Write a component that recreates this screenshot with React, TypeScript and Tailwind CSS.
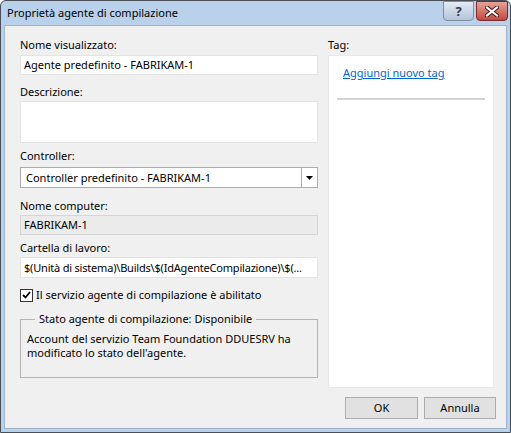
import React from "react";

const font = { fontFamily: '"Segoe UI", "Noto Sans", "Open Sans", sans-serif' };

function Label({ children, top }: { children: React.ReactNode; top: number }) {
  return (
    <div className="h-[16px] leading-[16px] text-[11px] text-black" style={{ marginTop: top }}>
      {children}
    </div>
  );
}

export default function App() {
  return (
    <div className="w-[511px] h-[433px] bg-white" style={font}>
      <div className="w-[511px] h-[433px] border border-[#4a4f57] rounded-t-[6px] bg-[#b9d1ea] flex flex-col">
        {/* Title bar */}
        <div className="h-[24px] flex items-center pl-[6px] pr-[2px] relative">
          <div className="text-[11px] text-black leading-[16px]">Proprietà agente di compilazione</div>
          <div className="ml-auto flex items-start self-start gap-[2px]">
            <div className="w-[31px] h-[20px] rounded-b-[4px] border border-[#7d8ea3] bg-gradient-to-b from-[#e3ebf4] to-[#b3c4d8] flex items-center justify-center text-[13px] font-bold text-[#2e3a4a] leading-none">
              ?
            </div>
            <div className="w-[32px] h-[20px] rounded-b-[4px] border border-[#7a2a2a] bg-gradient-to-b from-[#e5a198] to-[#c4483c] flex items-center justify-center">
              <svg width="14" height="11" viewBox="0 0 14 11">
                <path d="M2 1.5 L12 9.5 M12 1.5 L2 9.5" stroke="#3a1010" strokeWidth="4" strokeLinecap="square" />
                <path d="M2 1.5 L12 9.5 M12 1.5 L2 9.5" stroke="#ffffff" strokeWidth="2.2" strokeLinecap="square" />
              </svg>
            </div>
          </div>
        </div>
        {/* Client */}
        <div className="mx-[3px] mb-[3px] flex-1 bg-[#f0f0f0] border border-[#9fb4cc] flex flex-col pl-[15px] pr-[10px]">
          <div className="flex gap-[10px]">
            {/* Left column */}
            <div className="w-[298px] flex flex-col">
              <Label top={11}>Nome visualizzato:</Label>
              <div className="mt-[2px] h-[20px] bg-white border border-[#e3e3e3] pl-[3px] text-[11px] leading-[18px] text-black">
                Agente predefinito - FABRIKAM-1
              </div>
              <Label top={9}>Descrizione:</Label>
              <div className="mt-[1px] h-[42px] bg-white border border-[#e3e3e3]" />
              <Label top={5}>Controller:</Label>
              <div className="mt-[3px] h-[21px] bg-white border border-[#acacac] flex text-[11px] text-black">
                <div className="flex-1 pl-[5px] leading-[19px]">Controller predefinito - FABRIKAM-1</div>
                <div className="w-[16px] border-l border-[#acacac] flex items-center justify-center">
                  <svg width="7" height="4" viewBox="0 0 7 4">
                    <path d="M0 0 H7 L3.5 4 Z" fill="#000" />
                  </svg>
                </div>
              </div>
              <Label top={10}>Nome computer:</Label>
              <div className="mt-[1px] h-[20px] bg-[#ebebeb] border border-[#d5d5d5] pl-[3px] text-[11px] leading-[18px] text-black">
                FABRIKAM-1
              </div>
              <Label top={5}>Cartella di lavoro:</Label>
              <div className="mt-[1px] h-[21px] bg-white border border-[#e3e3e3] pl-[3px] text-[11px] leading-[19px] text-black whitespace-nowrap tracking-[-0.2px]">
                $(Unità di sistema)\Builds\$(IdAgenteCompilazione)\$(...
              </div>
              <div className="mt-[10px] flex items-center h-[14px]">
                <div className="w-[13px] h-[13px] border border-[#333] bg-white flex items-center justify-center">
                  <svg width="9" height="8" viewBox="0 0 9 8">
                    <path d="M1 4 L3.5 6.5 L8 1" stroke="#000" strokeWidth="1.8" fill="none" />
                  </svg>
                </div>
                <div className="ml-[3px] text-[11px] leading-[16px] text-black">
                  Il servizio agente di compilazione è abilitato
                </div>
              </div>
              <div className="mt-[17px] h-[59px] border border-[#b4b4b4] relative px-[6px] pt-[12px]">
                <div className="absolute left-[14px] top-[-9px] px-[4px] bg-[#f0f0f0] text-[11px] leading-[16px] text-black">
                  Stato agente di compilazione: Disponibile
                </div>
                <div className="text-[11px] leading-[14px] text-black">
                  Account del servizio Team Foundation DDUESRV ha modificato lo stato dell'agente.
                </div>
              </div>
            </div>
            {/* Right column */}
            <div className="w-[166px] flex flex-col">
              <Label top={11}>Tag:</Label>
              <div className="mt-[2px] h-[333px] bg-white border border-[#e8e8e8] flex flex-col">
                <div className="mt-[9px] ml-[14px] text-[11px] leading-[16px] text-[#0066cc] underline">
                  Aggiungi nuovo tag
                </div>
                <div className="mt-[17px] mx-[8px] h-[2px] bg-[#d4d4d4]" />
              </div>
            </div>
          </div>
          <div className="mt-[9px] flex justify-end gap-[6px]">
            <div className="w-[73px] h-[22px] bg-[#e1e1e1] border border-[#adadad] flex items-center justify-center text-[11px] text-black">
              OK
            </div>
            <div className="w-[72px] h-[22px] bg-[#e1e1e1] border border-[#adadad] flex items-center justify-center text-[11px] text-black">
              Annulla
            </div>
          </div>
        </div>
      </div>
    </div>
  );
}
